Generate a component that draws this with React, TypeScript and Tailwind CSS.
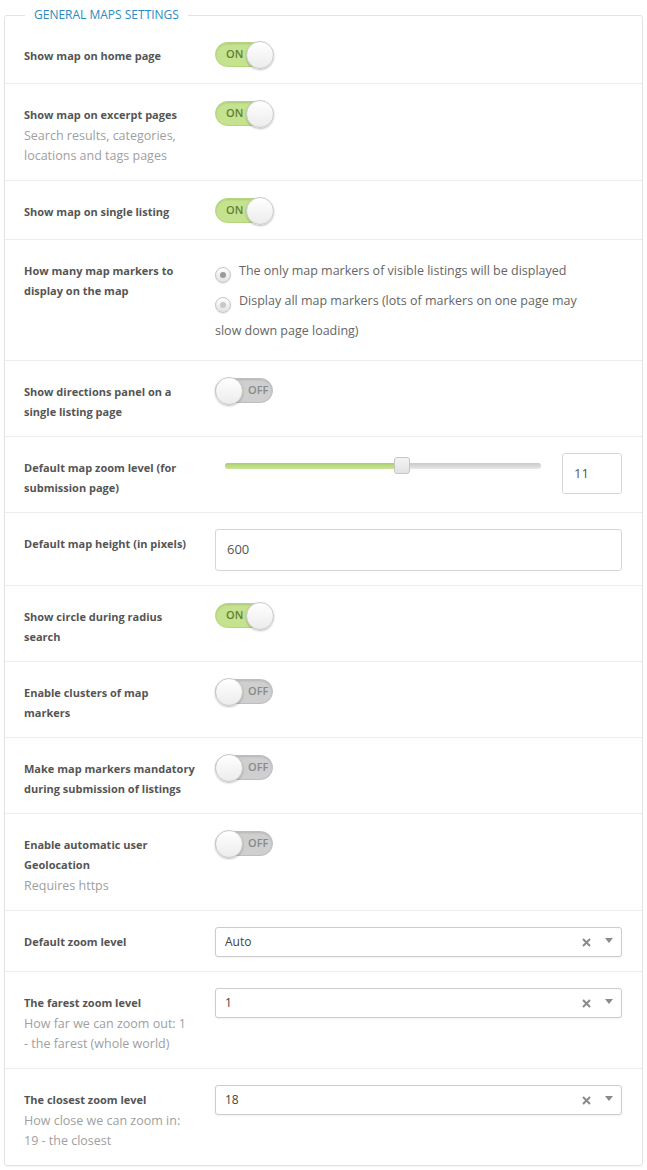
import type { ReactNode } from "react";

const font = { fontFamily: '"Open Sans", "Noto Sans", sans-serif' };

function Toggle({ on }: { on: boolean }) {
  return (
    <div className="relative h-[28px] w-[60px]">
      <div
        className={`absolute left-0 top-[1px] flex h-[25px] w-[58px] items-center rounded-full border ${
          on
            ? "border-[#b5d67e] bg-[#c5e38f] pl-[10px] text-[#5f7f34]"
            : "border-[#bdbdbd] bg-[#cfcfcf] pl-[32px] text-[#8a8a8a]"
        } text-[11px] font-semibold shadow-[inset_0_1px_2px_rgba(0,0,0,0.12)]`}
      >
        {on ? "ON" : "OFF"}
      </div>
      <div
        className={`absolute top-0 h-[28px] w-[28px] rounded-full border border-[#c9c9c9] bg-gradient-to-b from-white to-[#ececec] shadow-[0_1px_2px_rgba(0,0,0,0.25)] ${
          on ? "left-[31px]" : "left-0"
        }`}
      />
    </div>
  );
}

function Row({
  label,
  sub,
  children,
  last,
}: {
  label: ReactNode;
  sub?: ReactNode;
  children: ReactNode;
  last?: boolean;
}) {
  return (
    <div
      className={`flex gap-[20px] pb-[14px] pl-[19px] pr-[20px] pt-[16px] ${
        last ? "" : "border-b border-[#ececec]"
      }`}
    >
      <div className="w-[171px] shrink-0 pt-[5px]">
        <div className="text-[11px] font-bold leading-[20px] text-[#555]">{label}</div>
        {sub ? (
          <div className="mt-[1px] text-[12.5px] leading-[20px] text-[#a0a0a0]">{sub}</div>
        ) : null}
      </div>
      <div className="min-w-0 flex-1">{children}</div>
    </div>
  );
}

function Radio({ checked }: { checked?: boolean }) {
  return (
    <span className="mr-[8px] inline-flex h-[16px] w-[16px] translate-y-[3px] items-center justify-center rounded-full border border-[#c4c4c4] bg-gradient-to-b from-white to-[#e2e2e2] align-baseline shadow-[0_1px_1px_rgba(0,0,0,0.08)]">
      <span
        className={`h-[6px] w-[6px] rounded-full ${checked ? "bg-[#9a9a9a]" : "bg-[#c8c8c8]"}`}
      />
    </span>
  );
}

function Select({ value }: { value: string }) {
  return (
    <div className="flex h-[30px] items-center rounded-[3px] border border-[#cccccc] bg-white pl-[9px] pr-[8px] text-[12px] text-[#444] shadow-[0_1px_2px_rgba(0,0,0,0.06)]">
      <span className="flex-1">{value}</span>
      <svg width="9" height="9" viewBox="0 0 9 9" className="mr-[14px]">
        <path d="M1 1l7 7M8 1L1 8" stroke="#8a8a8a" strokeWidth="2" />
      </svg>
      <svg width="8" height="6" viewBox="0 0 8 6" className="mt-[-2px]">
        <path d="M0 0h8L4 5z" fill="#8a8a8a" />
      </svg>
    </div>
  );
}

export default function App() {
  return (
    <div className="bg-white px-[4px] pb-[4px] pt-[5px]" style={font}>
      <fieldset className="rounded-[3px] border border-[#e3e3e3] shadow-[0_1px_1px_rgba(0,0,0,0.04)]">
        <legend className="ml-[20px] px-[9px] text-[12px] leading-[20px] text-[#2a8cc0]">
          GENERAL MAPS SETTINGS
        </legend>

        <Row label="Show map on home page">
          <Toggle on />
        </Row>

        <Row
          label="Show map on excerpt pages"
          sub={
            <>
              Search results, categories,
              <br />
              locations and tags pages
            </>
          }
        >
          <Toggle on />
        </Row>

        <Row label="Show map on single listing">
          <Toggle on />
        </Row>

        <Row label="How many map markers to display on the map">
          <div className="text-[12.5px] leading-[30px] text-[#666]">
            <div>
              <Radio checked />
              The only map markers of visible listings will be displayed
            </div>
            <div>
              <Radio />
              Display all map markers (lots of markers on one page may
              <br />
              slow down page loading)
            </div>
          </div>
        </Row>

        <Row label="Show directions panel on a single listing page">
          <Toggle on={false} />
        </Row>

        <Row label="Default map zoom level (for submission page)">
          <div className="flex items-start">
            <div className="relative ml-[10px] mt-[10px] h-[6px] flex-1 rounded-full bg-gradient-to-b from-[#c9c9c9] to-[#e8e8e8]">
              <div className="absolute left-0 top-0 h-[6px] w-[55%] rounded-full bg-gradient-to-b from-[#a9d06a] to-[#cbe79a]" />
              <div className="absolute left-[53.5%] top-[-6px] h-[17px] w-[16px] rounded-[3px] border border-[#c6c6c6] bg-gradient-to-b from-[#f4f4f4] to-[#e2e2e2]" />
            </div>
            <div className="ml-[21px] flex h-[41px] w-[60px] items-center rounded-[3px] border border-[#d6d6d6] pl-[11px] text-[13px] text-[#555]">
              11
            </div>
          </div>
        </Row>

        <Row label="Default map height (in pixels)">
          <div className="flex h-[42px] items-center rounded-[3px] border border-[#d6d6d6] pl-[11px] text-[13px] text-[#555]">
            600
          </div>
        </Row>

        <Row label="Show circle during radius search">
          <Toggle on />
        </Row>

        <Row label="Enable clusters of map markers">
          <Toggle on={false} />
        </Row>

        <Row label="Make map markers mandatory during submission of listings">
          <Toggle on={false} />
        </Row>

        <Row label="Enable automatic user Geolocation" sub="Requires https">
          <Toggle on={false} />
        </Row>

        <Row label="Default zoom level">
          <Select value="Auto" />
        </Row>

        <Row
          label="The farest zoom level"
          sub={
            <>
              How far we can zoom out: 1
              <br />- the farest (whole world)
            </>
          }
        >
          <Select value="1" />
        </Row>

        <Row
          label="The closest zoom level"
          sub={
            <>
              How close we can zoom in:
              <br />
              19 - the closest
            </>
          }
          last
        >
          <Select value="18" />
        </Row>
      </fieldset>
    </div>
  );
}
